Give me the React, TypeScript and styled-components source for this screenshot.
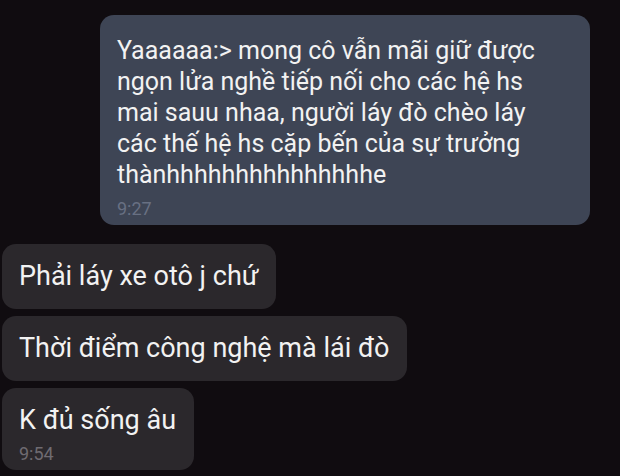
import React from "react";
import styled, { createGlobalStyle } from "styled-components";

const Global = createGlobalStyle`
  html, body {
    margin: 0;
    padding: 0;
    background: #100c10;
  }
  body {
    width: 620px;
    height: 476px;
    overflow: hidden;
    font-family: Roboto, "Noto Sans", "Liberation Sans", sans-serif;
  }
`;

const Thread = styled.div`
  display: flex;
  flex-direction: column;
  align-items: flex-start;
  gap: 7px;
  padding: 15px 0 0 2px;
  width: 620px;
  height: 476px;
  box-sizing: border-box;
  background: #100c10;
`;

const Bubble = styled.div<{ $mine?: boolean }>`
  box-sizing: border-box;
  border-radius: 14px;
  background: ${(p) => (p.$mine ? "#3e4555" : "#2b282c")};
  color: #f2f2f2;
  padding: ${(p) => (p.$mine ? "20px 17px 5px 17px" : "16px 18px 16px 17px")};
  width: ${(p) => (p.$mine ? "490px" : "auto")};
  margin-left: ${(p) => (p.$mine ? "98px" : "0")};
  margin-bottom: ${(p) => (p.$mine ? "12px" : "0")};
`;

const Text = styled.div<{ $mine?: boolean }>`
  font-size: ${(p) => (p.$mine ? "25px" : "27px")};
  line-height: ${(p) => (p.$mine ? "31px" : "33px")};
  white-space: nowrap;
`;

const Time = styled.div<{ $mine?: boolean }>`
  margin-top: ${(p) => (p.$mine ? "8px" : "6px")};
  font-size: 18px;
  line-height: 22px;
  color: ${(p) => (p.$mine ? "#687083" : "#6f6b71")};
`;

const Tail = styled(Bubble)`
  padding-bottom: 5px;
`;

const sentLines = [
  "Yaaaaaa:> mong cô vẫn mãi giữ được",
  "ngọn lửa nghề tiếp nối cho các hệ hs",
  "mai sauu nhaa, người láy đò chèo láy",
  "các thế hệ hs cặp bến của sự trưởng",
  "thànhhhhhhhhhhhhhhhe",
];

export default function App() {
  return (
    <>
      <Global />
      <Thread>
        <Bubble $mine>
          <Text $mine>
            {sentLines.map((l, i) => (
              <React.Fragment key={i}>
                {l}
                {i < sentLines.length - 1 && <br />}
              </React.Fragment>
            ))}
          </Text>
          <Time $mine>9:27</Time>
        </Bubble>
        <Bubble>
          <Text>Phải láy xe otô j chứ</Text>
        </Bubble>
        <Bubble>
          <Text>Thời điểm công nghệ mà lái đò</Text>
        </Bubble>
        <Tail>
          <Text>K đủ sống âu</Text>
          <Time>9:54</Time>
        </Tail>
      </Thread>
    </>
  );
}
